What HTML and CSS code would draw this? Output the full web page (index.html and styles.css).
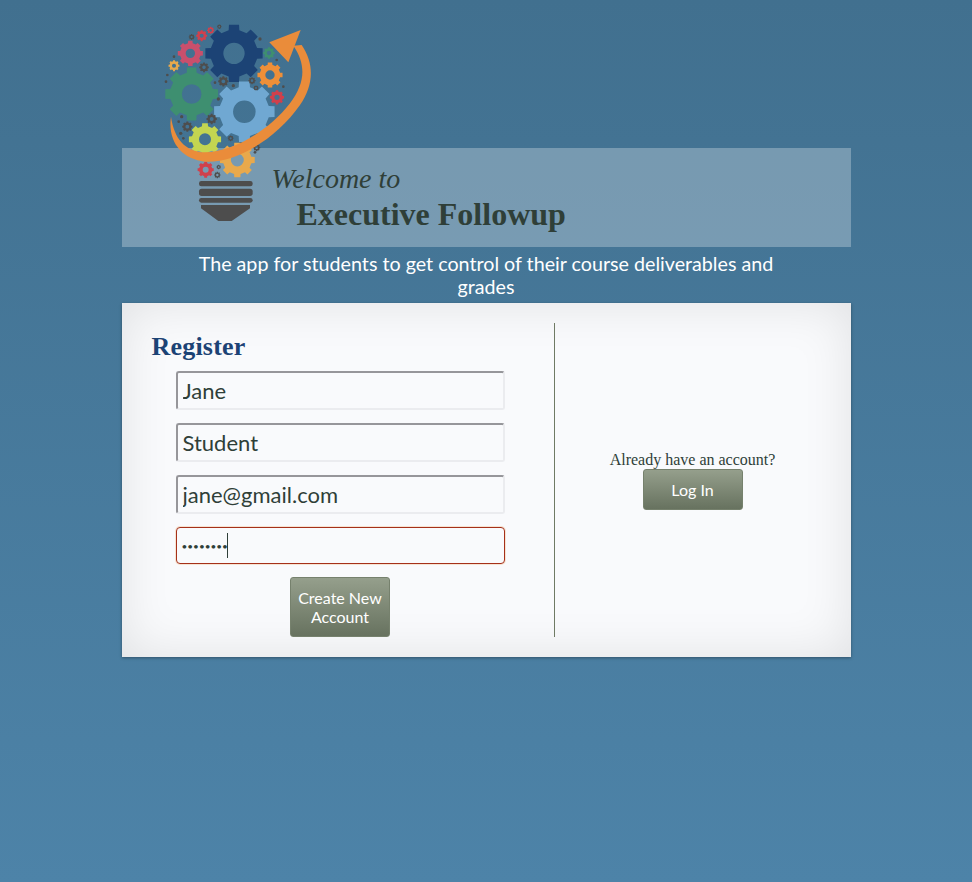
FILE: index.html
```html
<!DOCTYPE html>
<html lang="en">
<head>
<meta charset="utf-8">
<title>Executive Followup</title>
<link rel="stylesheet" href="styles.css">
</head>
<body>
<div class="page">
  <svg class="logo" viewBox="0 0 540 645" aria-hidden="true">
    <defs>
      <path id="gear" fill-rule="evenodd" d="M-1.8-7.79L-1.7-9.65L1.7-9.65L1.8-7.79L4.24-6.78L5.62-8.03L8.03-5.62L6.78-4.24L7.79-1.8L9.65-1.7L9.65 1.7L7.79 1.8L6.78 4.24L8.03 5.62L5.62 8.03L4.24 6.78L1.8 7.79L1.7 9.65L-1.7 9.65L-1.8 7.79L-4.24 6.78L-5.62 8.03L-8.03 5.62L-6.78 4.24L-7.79 1.8L-9.65 1.7L-9.65-1.7L-7.79-1.8L-6.78-4.24L-8.03-5.62L-5.62-8.03L-4.24-6.78ZM3.6 0A3.6 3.6 0 1 1-3.6 0A3.6 3.6 0 1 1 3.6 0Z"/>
    </defs>
    <use href="#gear" fill="#e8a94c" transform="translate(262 435) scale(5.4)"/>
    <use href="#gear" fill="#1c4375" transform="translate(252 115) scale(8.9)"/>
    <use href="#gear" fill="#c94f6c" transform="translate(121 115) scale(3.9)"/>
    <use href="#gear" fill="#d0404c" transform="translate(155 62) scale(1.7)"/>
    <use href="#gear" fill="#d0404c" transform="translate(182 46) scale(1.1)"/>
    <use href="#gear" fill="#4d4d4d" transform="translate(208 35) scale(.7)"/>
    <use href="#gear" fill="#4d4d4d" transform="translate(125 66) scale(.9)"/>
    <use href="#gear" fill="#3e8f70" transform="translate(357 114) scale(1.8)"/>
    <use href="#gear" fill="#ee8f38" transform="translate(360 180) scale(3.9)"/>
    <use href="#gear" fill="#3e8f70" transform="translate(125 237) scale(8.2)"/>
    <use href="#gear" fill="#70a8d2" transform="translate(283 290) scale(9.4)"/>
    <use href="#gear" fill="#d0404c" transform="translate(381 247) scale(2.2)"/>
    <use href="#gear" fill="#e8a94c" transform="translate(72 152) scale(1.7)"/>
    <use href="#gear" fill="#4d4d4d" transform="translate(162 157) scale(1.5)"/>
    <use href="#gear" fill="#4d4d4d" transform="translate(220 199) scale(1.6)"/>
    <use href="#gear" fill="#4d4d4d" transform="translate(306 197) scale(1.1)"/>
    <use href="#gear" fill="#4d4d4d" transform="translate(318 219) scale(.8)"/>
    <use href="#gear" fill="#c3d551" transform="translate(165 373) scale(5)"/>
    <use href="#gear" fill="#4d4d4d" transform="translate(185 312) scale(1.6)"/>
    <use href="#gear" fill="#4d4d4d" transform="translate(112 335) scale(1.6)"/>
    <use href="#gear" fill="#d0404c" transform="translate(167 464) scale(2.5)"/>
    <use href="#gear" fill="#4d4d4d" transform="translate(202 480) scale(1)"/>
    <use href="#gear" fill="#4d4d4d" transform="translate(206 456) scale(.7)"/>
    <use href="#gear" fill="#4d4d4d" transform="translate(320 398) scale(1.1)"/>
    <use href="#gear" fill="#4d4d4d" transform="translate(242 370) scale(.9)"/>
    <g fill="#4d4d4d">
      <circle cx="95" cy="305" r="5"/><circle cx="86" cy="320" r="4"/><circle cx="92" cy="355" r="5"/>
      <circle cx="100" cy="370" r="4"/><circle cx="52" cy="180" r="4"/><circle cx="48" cy="200" r="4"/>
      <circle cx="72" cy="125" r="4"/><circle cx="195" cy="203" r="4"/><circle cx="250" cy="212" r="5"/>
      <circle cx="205" cy="252" r="5"/><circle cx="330" cy="72" r="5"/><circle cx="380" cy="135" r="4"/>
      <circle cx="400" cy="215" r="4"/><circle cx="315" cy="412" r="4"/>
    </g>
    <path fill="#ea8c3a" d="M63 305C52 380 95 432 165 440C260 445 380 370 450 270C490 210 495 150 455 90L430 92C470 150 465 205 420 265C350 355 240 412 165 412C105 410 72 370 63 305Z"/>
    <path fill="#ea8c3a" d="M452 45L358 82L415 142Z"/>
    <g fill="#4d4d4d">
      <rect x="147" y="498" width="161" height="16" rx="7"/>
      <rect x="147" y="521" width="161" height="22" rx="8"/>
      <rect x="147" y="549" width="161" height="14" rx="7"/>
      <path d="M153 570H300V580L245 618H205L153 580Z"/>
    </g>
  </svg>
  <header class="banner">
    <p class="welcome">Welcome to</p>
    <h1 class="brand">Executive Followup</h1>
  </header>
  <p class="tagline">The app for students to get control of their course deliverables and grades</p>
  <main class="card">
    <section class="register">
      <h2 class="register-title">Register</h2>
      <form class="form">
        <input class="field" type="text" value="Jane">
        <input class="field" type="text" value="Student">
        <input class="field" type="email" value="jane@gmail.com">
        <div class="field-wrap">
          <input class="field field-error" type="password" value="abcdefgh">
          <span class="caret"></span>
        </div>
        <button class="btn btn-create" type="button">Create New Account</button>
      </form>
    </section>
    <section class="login">
      <p class="login-text">Already have an account?</p>
      <button class="btn btn-login" type="button">Log In</button>
    </section>
  </main>
</div>
</body>
</html>
```

FILE: styles.css
```css
* { box-sizing: border-box; }
html, body { height: 100%; }
body {
  margin: 0;
  background: linear-gradient(#41708f, #4d83a8);
  font-family: "Lato", "Open Sans", sans-serif;
  color: #2f3f38;
}
.page {
  position: relative;
  width: 729px;
  margin: 0 auto;
  padding-top: 148px;
}
.logo {
  position: absolute;
  left: 28.5px;
  top: 15px;
  width: 180px;
  height: 215px;
  z-index: 1;
}
.banner {
  height: 99px;
  background: rgba(255, 255, 255, .28);
  padding: 15px 0 0 150px;
  font-family: "Liberation Serif", serif;
}
.welcome {
  margin: 0;
  font-size: 28px;
  font-style: italic;
  line-height: 32px;
}
.brand {
  margin: 1px 0 0 25px;
  font-size: 32px;
  font-weight: bold;
  line-height: 36px;
}
.tagline {
  width: 600px;
  margin: 0 auto;
  height: 56px;
  padding-top: 5px;
  color: #fff;
  font-size: 19.7px;
  line-height: 23px;
  text-align: center;
}
.card {
  display: flex;
  height: 354px;
  padding: 20px 0;
  background: #f9fafc;
  box-shadow: 0 1px 3px rgba(0, 0, 0, .35), inset 0 0 50px rgba(0, 0, 0, .1);
}
.register {
  width: 433px;
  padding-left: 30px;
  border-right: 1px solid #6f7a64;
}
.register-title {
  margin: 9px 0 0;
  color: #1c4375;
  font-family: "Liberation Serif", serif;
  font-size: 26px;
  letter-spacing: .2px;
  line-height: 30px;
  font-weight: bold;
}
.form {
  display: flex;
  flex-direction: column;
  align-items: center;
  gap: 13px;
  width: 377px;
  margin-top: 9px;
}
.field {
  display: block;
  width: 329px;
  height: 39px;
  padding: 0 5px;
  border: 2px solid #ebecef;
  border-top-color: #96969a;
  border-left-color: #96969a;
  border-radius: 3px;
  background: #f9fafc;
  color: #2f3f38;
  font: 22px "Lato", "Open Sans", sans-serif;
  outline: none;
}
.field-wrap {
  position: relative;
}
.field-error {
  height: 37px;
  padding: 0 5px;
  border: 1px solid #a5301a;
  border-radius: 4px;
  box-shadow: 0 0 0 1px #f6e3d2;
  font-size: 10px;
}
.caret {
  position: absolute;
  left: 51px;
  top: 6px;
  width: 1px;
  height: 25px;
  background: #2f3f38;
}
.btn {
  border: 1px solid #76816d;
  border-radius: 3px;
  background: linear-gradient(#959f8c, #67725f);
  color: #fff;
  font-family: "Lato", "Open Sans", sans-serif;
  font-size: 16px;
  line-height: 19px;
  width: 100px;
  padding: 0 4px;
}
.btn-create { height: 60px; }
.btn-login { height: 41px; }
.login {
  flex: 1;
  display: flex;
  flex-direction: column;
  align-items: center;
  justify-content: center;
  padding-right: 20px;
}
.login-text {
  margin: 0;
  font-family: "Liberation Serif", serif;
  font-size: 16px;
  line-height: 18px;
}
```
